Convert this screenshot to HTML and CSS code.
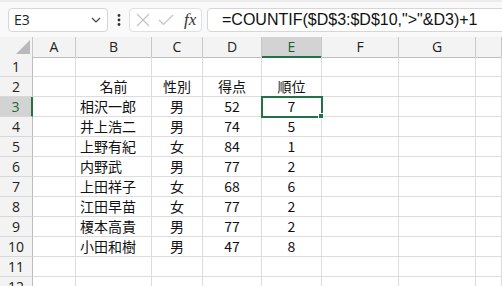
FILE: index.html
```html
<!DOCTYPE html>
<html>
<head>
  <meta charset="UTF-8">
  <title>順位 - COUNTIF</title>
  <link rel="stylesheet" href="styles.css">
</head>
<body>
  <!-- Bar rumus -->
  <div class="toolbar">
    <div class="namebox">
      <span>E3</span>
      <svg width="10" height="6" viewBox="0 0 10 6"><path d="M1 1 L5 5 L9 1" fill="none" stroke="#444" stroke-width="1.2"/></svg>
    </div>
    <div class="dots">
      <svg width="4" height="12" viewBox="0 0 4 12"><circle cx="2" cy="1.5" r="1.4" fill="#333"/><circle cx="2" cy="6" r="1.4" fill="#333"/><circle cx="2" cy="10.5" r="1.4" fill="#333"/></svg>
    </div>
    <div class="fxbox">
      <svg width="14" height="14" viewBox="0 0 14 14"><path d="M1 1 L13 13 M13 1 L1 13" stroke="#c4c4c4" stroke-width="1.2"/></svg>
      <svg width="16" height="12" viewBox="0 0 16 12"><path d="M1 6 L5.5 10.5 L15 1" fill="none" stroke="#c4c4c4" stroke-width="1.2"/></svg>
      <span class="fx">fx</span>
    </div>
    <div class="formula">=COUNTIF($D$3:$D$10,"&gt;"&amp;D3)+1</div>
  </div>

  <!-- Lembar kerja -->
  <div class="sheet">
    <div class="row head">
      <div class="cell corner"><span class="tri"></span></div>
      <div class="cell">A</div><div class="cell">B</div><div class="cell">C</div><div class="cell">D</div>
      <div class="cell active">E</div><div class="cell">F</div><div class="cell">G</div><div class="cell"></div>
    </div>
    <div class="row">
      <div class="cell num">1</div>
      <div class="cell"></div><div class="cell"></div><div class="cell"></div><div class="cell"></div>
      <div class="cell"></div><div class="cell"></div><div class="cell"></div><div class="cell"></div>
    </div>
    <div class="row">
      <div class="cell num">2</div>
      <div class="cell"></div><div class="cell c">名前</div><div class="cell c">性別</div><div class="cell c">得点</div>
      <div class="cell c">順位</div><div class="cell"></div><div class="cell"></div><div class="cell"></div>
    </div>
    <div class="row">
      <div class="cell num active">3</div>
      <div class="cell"></div><div class="cell l">相沢一郎</div><div class="cell c">男</div><div class="cell c">52</div>
      <div class="cell c selected">7</div><div class="cell"></div><div class="cell"></div><div class="cell"></div>
    </div>
    <div class="row">
      <div class="cell num">4</div>
      <div class="cell"></div><div class="cell l">井上浩二</div><div class="cell c">男</div><div class="cell c">74</div>
      <div class="cell c">5</div><div class="cell"></div><div class="cell"></div><div class="cell"></div>
    </div>
    <div class="row">
      <div class="cell num">5</div>
      <div class="cell"></div><div class="cell l">上野有紀</div><div class="cell c">女</div><div class="cell c">84</div>
      <div class="cell c">1</div><div class="cell"></div><div class="cell"></div><div class="cell"></div>
    </div>
    <div class="row">
      <div class="cell num">6</div>
      <div class="cell"></div><div class="cell l">内野武</div><div class="cell c">男</div><div class="cell c">77</div>
      <div class="cell c">2</div><div class="cell"></div><div class="cell"></div><div class="cell"></div>
    </div>
    <div class="row">
      <div class="cell num">7</div>
      <div class="cell"></div><div class="cell l">上田祥子</div><div class="cell c">女</div><div class="cell c">68</div>
      <div class="cell c">6</div><div class="cell"></div><div class="cell"></div><div class="cell"></div>
    </div>
    <div class="row">
      <div class="cell num">8</div>
      <div class="cell"></div><div class="cell l">江田早苗</div><div class="cell c">女</div><div class="cell c">77</div>
      <div class="cell c">2</div><div class="cell"></div><div class="cell"></div><div class="cell"></div>
    </div>
    <div class="row">
      <div class="cell num">9</div>
      <div class="cell"></div><div class="cell l">榎本高貴</div><div class="cell c">男</div><div class="cell c">77</div>
      <div class="cell c">2</div><div class="cell"></div><div class="cell"></div><div class="cell"></div>
    </div>
    <div class="row">
      <div class="cell num">10</div>
      <div class="cell"></div><div class="cell l">小田和樹</div><div class="cell c">男</div><div class="cell c">47</div>
      <div class="cell c">8</div><div class="cell"></div><div class="cell"></div><div class="cell"></div>
    </div>
    <div class="row">
      <div class="cell num">11</div>
      <div class="cell"></div><div class="cell"></div><div class="cell"></div><div class="cell"></div>
      <div class="cell"></div><div class="cell"></div><div class="cell"></div><div class="cell"></div>
    </div>
    <div class="row">
      <div class="cell num">12</div>
      <div class="cell"></div><div class="cell"></div><div class="cell"></div><div class="cell"></div>
      <div class="cell"></div><div class="cell"></div><div class="cell"></div><div class="cell"></div>
    </div>
  </div>
</body>
</html>
```

FILE: styles.css
```css
body {
  margin: 0;
  width: 502px;
  height: 286px;
  overflow: hidden;
  background: #fff;
  font-family: "Noto Sans CJK JP", sans-serif;
}

/* Bar rumus */
.toolbar {
  height: 37px;
  box-sizing: border-box;
  border-top: 2px solid #ececec;
  background: #f9f9f9;
  display: flex;
  align-items: center;
  padding: 0 0 0 8px;
}

.namebox {
  width: 100px;
  height: 24px;
  box-sizing: border-box;
  border: 1px solid #d6d6d6;
  border-radius: 4px;
  background: #fff;
  display: flex;
  align-items: center;
  justify-content: space-between;
  padding: 0 6px 0 5px;
  font-family: "Open Sans", sans-serif;
  font-size: 14px;
  color: #222;
}

.dots {
  width: 21px;
  display: flex;
  justify-content: center;
}

.fxbox {
  width: 73px;
  height: 24px;
  box-sizing: border-box;
  border: 1px solid #e0e0e0;
  border-radius: 4px;
  background: #fff;
  display: flex;
  align-items: center;
  gap: 8px;
  padding: 0 0 0 6px;
}

.fx {
  font-family: "Liberation Serif", serif;
  font-style: italic;
  font-size: 17px;
  color: #333;
  margin-left: 2px;
}

.formula {
  flex: 1;
  height: 24px;
  box-sizing: border-box;
  margin-left: 5px;
  margin-right: -8px;
  border: 1px solid #d6d6d6;
  border-radius: 4px;
  background: #fff;
  padding-left: 14px;
  font-family: "Liberation Sans", sans-serif;
  font-size: 16px;
  line-height: 22px;
  color: #111;
  white-space: nowrap;
}

/* Lembar kerja */
.row {
  display: grid;
  grid-template-columns: 33px 43px 76px 51px 59px 60px 77px 77px 1fr;
  height: 20px;
}

.cell {
  box-sizing: border-box;
  border-right: 1px solid #dcdcdc;
  border-bottom: 1px solid #dcdcdc;
  font-size: 14px;
  line-height: 19px;
  color: #111;
  white-space: nowrap;
  position: relative;
}

.c { text-align: center; }
.l { padding-left: 4px; }

.head .cell {
  background: #f3f3f3;
  border-right-color: #c8c8c8;
  border-bottom-color: #bdbdbd;
  text-align: center;
  font-family: "Open Sans", sans-serif;
  font-size: 14px;
  color: #222;
}

.head .cell.active {
  background: #d3d3d3;
  border-bottom: 2px solid #217346;
  color: #1d5e38;
}

.corner {
  display: flex;
  align-items: flex-end;
  justify-content: flex-end;
  padding: 0 2px 3px 0;
}

.tri {
  width: 0;
  height: 0;
  border-left: 14px solid transparent;
  border-bottom: 14px solid #b9b9b9;
}

.num {
  background: #f3f3f3;
  border-right-color: #bdbdbd;
  border-bottom-color: #d8d8d8;
  text-align: center;
  font-family: "Open Sans", sans-serif;
  font-size: 14px;
  color: #222;
}

.num.active {
  background: #d3d3d3;
  border-right: 2px solid #217346;
  color: #1d6b3f;
}

.selected {
  outline: 2px solid #217346;
  outline-offset: -1px;
  z-index: 2;
}

.selected::after {
  content: "";
  position: absolute;
  right: -3px;
  bottom: -3px;
  width: 6px;
  height: 6px;
  background: #217346;
  border: 1px solid #fff;
  box-sizing: border-box;
}
```
